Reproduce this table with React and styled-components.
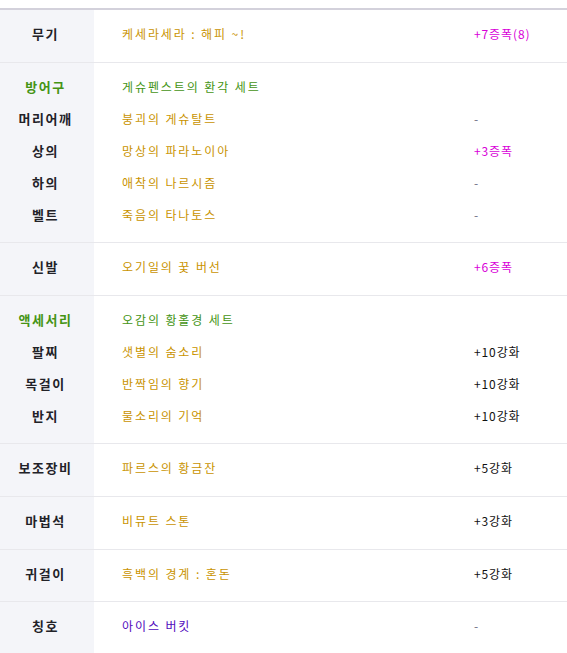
import React from "react";
import styled, { createGlobalStyle } from "styled-components";

const Global = createGlobalStyle`
  html, body { margin: 0; padding: 0; background: #fff; }
  body { font-family: "Noto Sans CJK KR", "Noto Sans", sans-serif; }
`;

const Table = styled.div`
  margin-top: 8px;
  border-top: 2px solid #d3d1db;
  width: 567px;
`;

const Section = styled.div`
  display: grid;
  grid-template-columns: 94px 1fr;
  border-top: ${(p) => (p.$first ? "none" : "1px solid #e8e8ec")};
`;

const LabelCol = styled.div`
  background: #f4f5f9;
  padding: 8px 0 11.6px;
`;

const BodyCol = styled.div`
  padding: 8px 0 11.6px;
`;

const Label = styled.div`
  height: 32px;
  box-sizing: border-box;
  padding: 0 3px 1px 0;
  display: flex;
  align-items: center;
  justify-content: center;
  font-size: 13px;
  font-weight: 700;
  letter-spacing: 1.5px;
  color: ${(p) => (p.$green ? "#459414" : "#222228")};
`;

const Row = styled.div`
  height: 32px;
  box-sizing: border-box;
  padding: 0 0 1px 28px;
  display: grid;
  grid-template-columns: 352px 1fr;
  align-items: center;
  font-size: 12px;
`;

const Item = styled.span`
  color: ${(p) => p.$color};
  letter-spacing: 1.9px;
`;

const Opt = styled.span`
  color: ${(p) => p.$color};
  letter-spacing: 0.9px;
`;

const GOLD = "#c99300";
const GREEN = "#449414";
const PURPLE = "#5008bc";
const MAG = "#d800d8";
const BLACK = "#111";
const GRAY = "#6e6e84";

const data = [
  [{ label: "무기", item: "케세라세라 : 해피 ~!", c: GOLD, opt: "+7증폭(8)", oc: MAG }],
  [
    { label: "방어구", green: true, item: "게슈펜스트의 환각 세트", c: GREEN, opt: "", oc: BLACK },
    { label: "머리어깨", item: "붕괴의 게슈탈트", c: GOLD, opt: "-", oc: GRAY },
    { label: "상의", item: "망상의 파라노이아", c: GOLD, opt: "+3증폭", oc: MAG },
    { label: "하의", item: "애착의 나르시즘", c: GOLD, opt: "-", oc: GRAY },
    { label: "벨트", item: "죽음의 타나토스", c: GOLD, opt: "-", oc: GRAY },
  ],
  [{ label: "신발", item: "오기일의 꿏 버선", c: GOLD, opt: "+6증폭", oc: MAG }],
  [
    { label: "액세서리", green: true, item: "오감의 황홀경 세트", c: GREEN, opt: "", oc: BLACK },
    { label: "팔찌", item: "샛별의 숨소리", c: GOLD, opt: "+10강화", oc: BLACK },
    { label: "목걸이", item: "반짝임의 향기", c: GOLD, opt: "+10강화", oc: BLACK },
    { label: "반지", item: "물소리의 기억", c: GOLD, opt: "+10강화", oc: BLACK },
  ],
  [{ label: "보조장비", item: "파르스의 황금잔", c: GOLD, opt: "+5강화", oc: BLACK }],
  [{ label: "마법석", item: "비뮤트 스톤", c: GOLD, opt: "+3강화", oc: BLACK }],
  [{ label: "귀걸이", item: "흑백의 경계 : 혼돈", c: GOLD, opt: "+5강화", oc: BLACK }],
  [{ label: "칭호", item: "아이스 버킷", c: PURPLE, opt: "-", oc: GRAY }],
];

export default function App() {
  return (
    <>
      <Global />
      <Table>
        {data.map((rows, i) => (
          <Section key={i} $first={i === 0}>
            <LabelCol>
              {rows.map((r, j) => (
                <Label key={j} $green={r.green}>{r.label}</Label>
              ))}
            </LabelCol>
            <BodyCol>
              {rows.map((r, j) => (
                <Row key={j}>
                  <Item $color={r.c}>{r.item}</Item>
                  <Opt $color={r.oc}>{r.opt}</Opt>
                </Row>
              ))}
            </BodyCol>
          </Section>
        ))}
      </Table>
    </>
  );
}
